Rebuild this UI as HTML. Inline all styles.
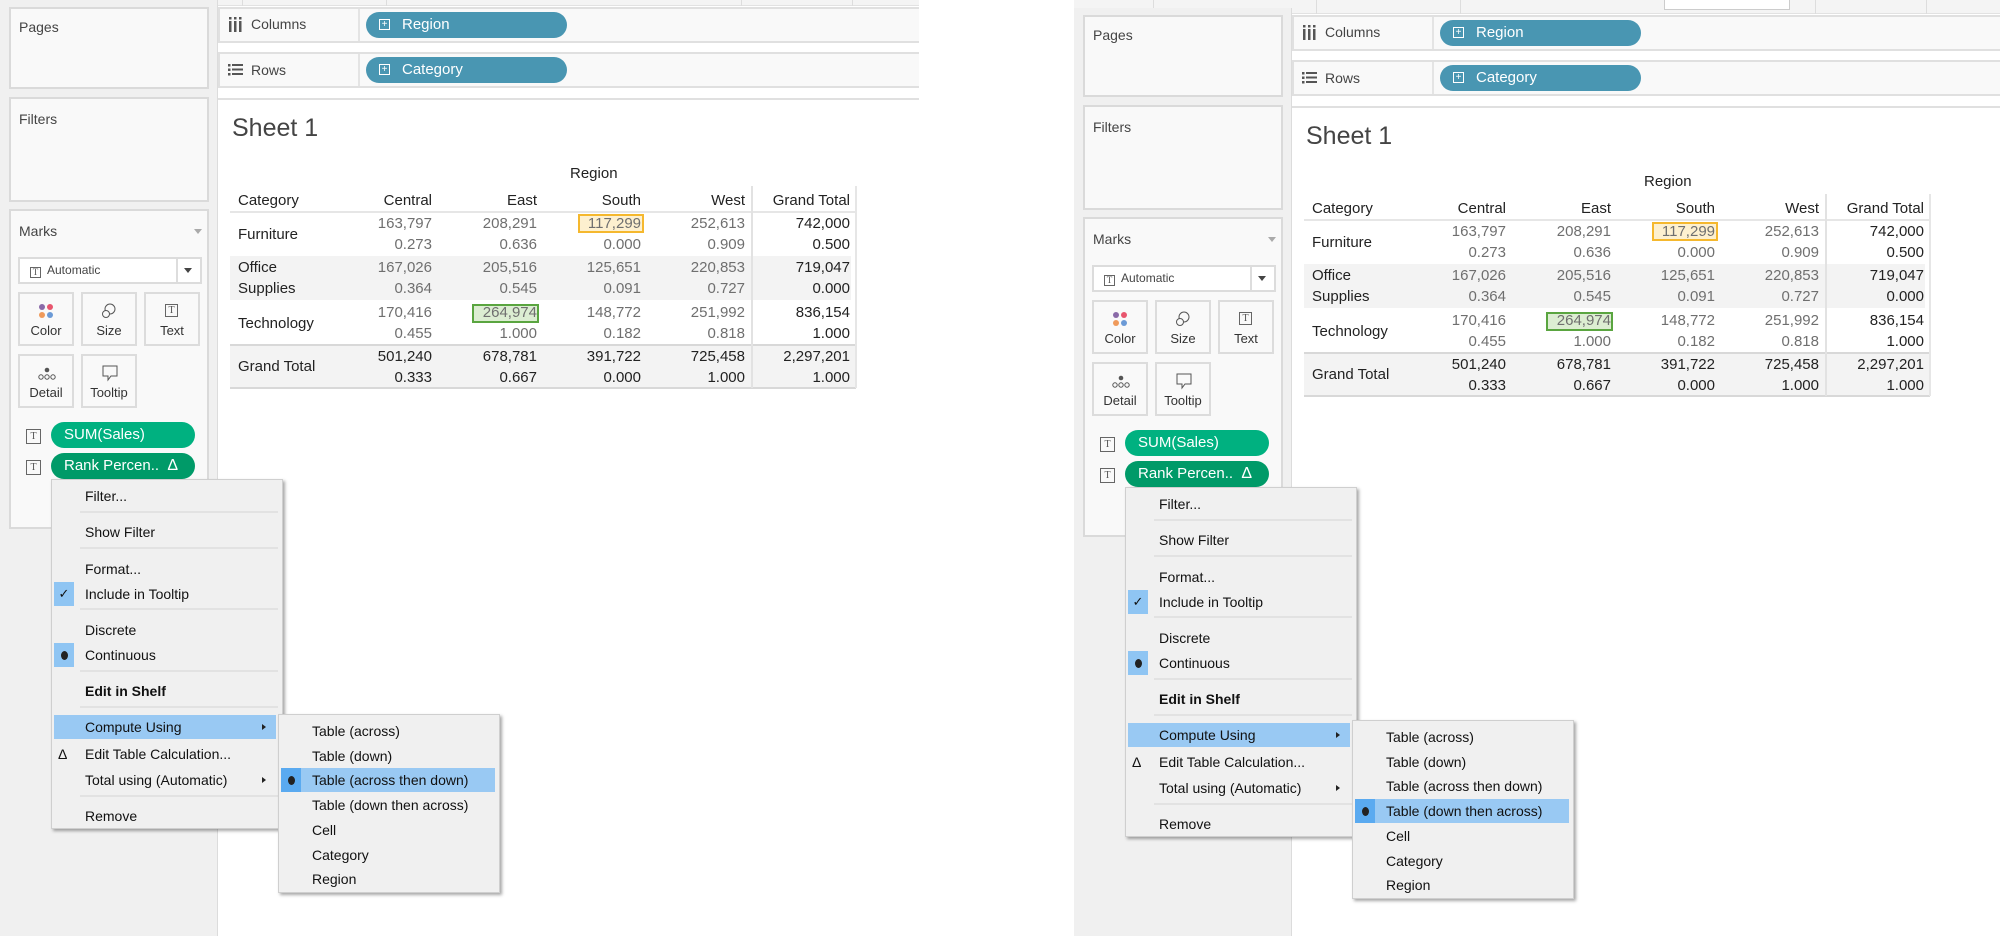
<!DOCTYPE html>
<html><head><meta charset="utf-8"><style>
*{margin:0;padding:0;box-sizing:border-box}
html,body{width:2000px;height:936px;overflow:hidden}
body{background:#fff;position:relative;font-family:"Liberation Sans",Arial,sans-serif;color:#333}
.scr{position:absolute;top:0;height:936px;overflow:hidden;background:#fff}
.in{position:absolute;left:0;width:100%;height:928px;overflow:visible}
.a{position:absolute}
.strip{left:0;top:-30px;width:1000px;height:36px;background:#f4f4f4;border-bottom:1px solid #e2e2e2}
.side{left:0;top:0;width:218px;height:936px;background:#f0f0f0;border-right:1px solid #dcdcdc}
.box{background:#f9f9f9;border:2px solid #dadada}
.lbl{font-size:14px;color:#444}
.shelf{background:#f9f9f9;border:2px solid #e0e0e0;left:218px;width:760px;height:36px}
.shelf .div{position:absolute;left:138px;top:0;width:2px;height:32px;background:#e4e4e4}
.pill{position:absolute;border-radius:14px;color:#fff;font-size:15px;line-height:26px;height:26px}
.blue{background:#4996b2;left:146px;top:3px;width:201px;padding-left:36px}
.pl{position:absolute;left:13px;top:7px;width:11px;height:11px;border:1px solid #fff;font-size:10px;line-height:9px;text-align:center}
.canvas{left:218px;top:98px;width:760px;height:830px;background:#fff;border-top:2px solid #e0e0e0}
.t{position:absolute;font-size:15px;line-height:21px;white-space:nowrap}
.v{color:#6f6f6f;text-align:right}
.d{color:#222;text-align:right}
.band{position:absolute;background:#f3f3f3}
.btn{position:absolute;background:#f9f9f9;border:2px solid #dcdcdc;width:56px;height:54px;font-size:13px;color:#333;text-align:center}
.btn .cap{position:absolute;left:0;right:0;bottom:6px}
.ti{display:inline-block;width:13px;height:13px;border:1px solid #666;font-size:10px;line-height:11px;text-align:center;color:#555;font-family:"Liberation Serif",serif}
.menu{position:absolute;background:#f0f0f0;border:1px solid #cfcfcf;box-shadow:2px 2px 3px rgba(0,0,0,.35)}
.mi{position:absolute;left:0;right:0;height:24px;font-size:14px;line-height:24px;color:#111;padding-left:33px;white-space:nowrap}
.sep{position:absolute;left:28px;right:4px;height:2px;background:#e2e2e2}
.hl{background:#99c9f3}
.ic{position:absolute;left:2px;top:0;width:20px;height:24px;background:#8fc5f3;text-align:center;font-size:13px}
.dot{display:inline-block;width:7px;height:9px;border-radius:50%;background:#222;margin-top:8px}
.arr{position:absolute;right:10px;top:9px;width:0;height:0;border-left:4px solid #222;border-top:3px solid transparent;border-bottom:3px solid transparent}
</style></head><body>

<div class="scr" style="left:0;width:919px">
<div class="in" style="top:0">
<div class="a strip"></div>
<div class="a" style="left:79px;top:-10px;width:1px;height:16px;background:#ddd"></div>
<div class="a" style="left:242px;top:-10px;width:1px;height:16px;background:#ddd"></div>
<div class="a" style="left:386px;top:-10px;width:1px;height:16px;background:#ddd"></div>
<div class="a" style="left:741px;top:-10px;width:1px;height:16px;background:#ddd"></div>
<div class="a" style="left:852px;top:-10px;width:1px;height:16px;background:#ddd"></div>
<div class="a side"></div>
<div class="a box" style="left:9px;top:7px;width:200px;height:82px"><div class="a lbl" style="left:8px;top:10px">Pages</div></div>
<div class="a box" style="left:9px;top:97px;width:200px;height:105px"><div class="a lbl" style="left:8px;top:12px">Filters</div></div>
<div class="a box" style="left:9px;top:209px;width:200px;height:320px">
 <div class="a lbl" style="left:8px;top:12px">Marks</div>
 <div class="a" style="left:183px;top:18px;border-top:5px solid #aaa;border-left:4px solid transparent;border-right:4px solid transparent"></div>
 <div class="a" style="left:7px;top:46px;width:184px;height:27px;background:#fff;border:2px solid #dcdcdc;font-size:12px;color:#444;line-height:23px;padding-left:10px"><span class="ti" style="width:11px;height:11px;font-size:9px;line-height:9px;vertical-align:-1px">T</span>&nbsp; Automatic
  <div class="a" style="left:156px;top:0;width:2px;height:23px;background:#ddd"></div>
  <div class="a" style="left:164px;top:9px;border-top:5px solid #444;border-left:4px solid transparent;border-right:4px solid transparent"></div></div>
 <div class="btn" style="left:7px;top:81px"><div class="a" style="left:19px;top:10px;width:6px;height:6px;border-radius:3px;background:#8a6aa8"></div><div class="a" style="left:27px;top:10px;width:6px;height:6px;border-radius:3px;background:#e8566e"></div><div class="a" style="left:19px;top:18px;width:6px;height:6px;border-radius:3px;background:#ef9a5b"></div><div class="a" style="left:27px;top:18px;width:6px;height:6px;border-radius:3px;background:#6b9ad6"></div><div class="cap">Color</div></div>
 <div class="btn" style="left:70px;top:81px"><svg class="a" style="left:17px;top:8px" width="18" height="18"><circle cx="10" cy="7" r="5" fill="none" stroke="#555"/><circle cx="6" cy="12" r="3.5" fill="#f9f9f9" stroke="#555"/></svg><div class="cap">Size</div></div>
 <div class="btn" style="left:133px;top:81px"><span class="ti a" style="left:19px;top:10px">T</span><div class="cap">Text</div></div>
 <div class="btn" style="left:7px;top:143px"><svg class="a" style="left:16px;top:10px" width="22" height="16"><circle cx="11" cy="4" r="2.3" fill="#555"/><circle cx="5" cy="11" r="2.2" fill="none" stroke="#555"/><circle cx="11" cy="11" r="2.2" fill="none" stroke="#555"/><circle cx="17" cy="11" r="2.2" fill="none" stroke="#555"/></svg><div class="cap">Detail</div></div>
 <div class="btn" style="left:70px;top:143px"><svg class="a" style="left:18px;top:8px" width="18" height="18"><path d="M2 2h14v10h-6l-3 4v-4H2z" fill="none" stroke="#555"/></svg><div class="cap">Tooltip</div></div>
 <span class="ti a" style="left:15px;top:218px;width:15px;height:15px;line-height:13px">T</span>
 <div class="pill" style="left:40px;top:211px;width:144px;background:#00b180;padding-left:13px">SUM(Sales)</div>
 <span class="ti a" style="left:15px;top:249px;width:15px;height:15px;line-height:13px">T</span>
 <div class="pill" style="left:40px;top:242px;width:144px;background:#009a68;padding-left:13px">Rank Percen..&nbsp; <span style="font-size:16px">&#916;</span></div>
</div>

<div class="a shelf" style="top:7px"><div class="div"></div>
 <svg class="a" style="left:8px;top:8px" width="16" height="16"><rect x="1" y="4" width="2.5" height="11" fill="#555"/><rect x="6" y="4" width="2.5" height="11" fill="#555"/><rect x="11" y="4" width="2.5" height="11" fill="#555"/><rect x="1" y="0" width="2.5" height="2.5" fill="#555"/><rect x="6" y="0" width="2.5" height="2.5" fill="#555"/><rect x="11" y="0" width="2.5" height="2.5" fill="#555"/></svg>
 <div class="a lbl" style="left:31px;top:7px">Columns</div>
 <div class="pill blue"><div class="pl">+</div>Region</div></div>
<div class="a shelf" style="top:52px"><div class="div"></div>
 <svg class="a" style="left:8px;top:9px" width="16" height="14"><g fill="#555"><rect x="0" y="1" width="2.5" height="2.5"/><rect x="0" y="5.5" width="2.5" height="2.5"/><rect x="0" y="10" width="2.5" height="2.5"/><rect x="4" y="1" width="11" height="2"/><rect x="4" y="5.5" width="11" height="2"/><rect x="4" y="10" width="11" height="2"/></g></svg>
 <div class="a lbl" style="left:31px;top:8px">Rows</div>
 <div class="pill blue"><div class="pl">+</div>Category</div></div>

<div class="a canvas"></div>
<div class="a" style="left:232px;top:114px;font-size:25px;color:#444">Sheet 1</div>
<div class="t" style="left:570px;top:163px;color:#222">Region</div>
<div class="band" style="left:230px;top:256px;width:621px;height:44px"></div>
<div class="band" style="left:230px;top:345px;width:626px;height:43px"></div>
<div class="a" style="left:230px;top:211px;width:626px;height:2px;background:#e6e6e6"></div>
<div class="a" style="left:230px;top:344px;width:626px;height:2px;background:#d8d8d8"></div>
<div class="a" style="left:230px;top:387px;width:626px;height:2px;background:#d8d8d8"></div>
<div class="a" style="left:751px;top:186px;width:2px;height:202px;background:#e2e2e2"></div>
<div class="a" style="left:855px;top:186px;width:2px;height:202px;background:#e6e6e6"></div>
<div class="a" style="left:578px;top:214px;width:66px;height:19px;background:#fdf0cf;border:2px solid #f5b82e"></div>
<div class="a" style="left:472px;top:304px;width:67px;height:19px;background:#dcedd2;border:2px solid #5aa540"></div>
<div class="t" style="left:238px;top:190px;color:#222">Category</div>
<div class="t" style="left:238px;top:224px;color:#222">Furniture</div>
<div class="t" style="left:238px;top:257px;color:#222">Office<br>Supplies</div>
<div class="t" style="left:238px;top:313px;color:#222">Technology</div>
<div class="t" style="left:238px;top:356px;color:#222">Grand Total</div>
<div class="t d" style="left:332px;width:100px;top:190px">Central</div>
<div class="t d" style="left:437px;width:100px;top:190px">East</div>
<div class="t d" style="left:541px;width:100px;top:190px">South</div>
<div class="t d" style="left:645px;width:100px;top:190px">West</div>
<div class="t d" style="left:750px;width:100px;top:190px">Grand Total</div>
<div class="t v" style="left:332px;width:100px;top:213px">163,797<br>0.273</div>
<div class="t v" style="left:437px;width:100px;top:213px">208,291<br>0.636</div>
<div class="t v" style="left:541px;width:100px;top:213px">117,299<br>0.000</div>
<div class="t v" style="left:645px;width:100px;top:213px">252,613<br>0.909</div>
<div class="t d" style="left:750px;width:100px;top:213px">742,000<br>0.500</div>
<div class="t v" style="left:332px;width:100px;top:257px">167,026<br>0.364</div>
<div class="t v" style="left:437px;width:100px;top:257px">205,516<br>0.545</div>
<div class="t v" style="left:541px;width:100px;top:257px">125,651<br>0.091</div>
<div class="t v" style="left:645px;width:100px;top:257px">220,853<br>0.727</div>
<div class="t d" style="left:750px;width:100px;top:257px">719,047<br>0.000</div>
<div class="t v" style="left:332px;width:100px;top:302px">170,416<br>0.455</div>
<div class="t v" style="left:437px;width:100px;top:302px">264,974<br>1.000</div>
<div class="t v" style="left:541px;width:100px;top:302px">148,772<br>0.182</div>
<div class="t v" style="left:645px;width:100px;top:302px">251,992<br>0.818</div>
<div class="t d" style="left:750px;width:100px;top:302px">836,154<br>1.000</div>
<div class="t d" style="left:332px;width:100px;top:346px">501,240<br>0.333</div>
<div class="t d" style="left:437px;width:100px;top:346px">678,781<br>0.667</div>
<div class="t d" style="left:541px;width:100px;top:346px">391,722<br>0.000</div>
<div class="t d" style="left:645px;width:100px;top:346px">725,458<br>1.000</div>
<div class="t d" style="left:750px;width:100px;top:346px">2,297,201<br>1.000</div>

<div class="menu" style="left:51px;top:479px;width:232px;height:350px">
 <div class="mi" style="top:4px">Filter...</div><div class="sep" style="top:31px"></div>
 <div class="mi" style="top:40px">Show Filter</div><div class="sep" style="top:67px"></div>
 <div class="mi" style="top:77px">Format...</div>
 <div class="mi" style="top:102px"><div class="ic">&#10003;</div>Include in Tooltip</div><div class="sep" style="top:128px"></div>
 <div class="mi" style="top:138px">Discrete</div>
 <div class="mi" style="top:163px"><div class="ic"><span class="dot"></span></div>Continuous</div><div class="sep" style="top:190px"></div>
 <div class="mi" style="top:199px;font-weight:bold">Edit in Shelf</div><div class="sep" style="top:226px"></div>
 <div class="mi hl" style="top:235px;left:2px;right:6px;padding-left:31px">Compute Using<div class="arr"></div></div>
 <div class="mi" style="top:262px"><div class="a" style="left:6px;top:0">&#916;</div>Edit Table Calculation...</div>
 <div class="mi" style="top:288px">Total using (Automatic)<div class="arr" style="right:16px"></div></div><div class="sep" style="top:315px"></div>
 <div class="mi" style="top:324px">Remove</div>
</div>
<div class="menu" style="left:278px;top:714px;width:222px;height:179px">
 <div class="mi" style="top:4px">Table (across)</div>
 <div class="mi" style="top:29px">Table (down)</div>
 <div class="mi hl" style="top:53px;left:2px;right:4px;padding-left:31px"><div class="ic" style="left:0;background:#5aaaf0"><span class="dot"></span></div>Table (across then down)</div>
 <div class="mi" style="top:78px">Table (down then across)</div>
 <div class="mi" style="top:103px">Cell</div>
 <div class="mi" style="top:128px">Category</div>
 <div class="mi" style="top:152px">Region</div>
</div>
</div></div>

<div class="scr" style="left:1074px;width:926px">
<div class="in" style="top:8px">
<div class="a strip"></div>
<div class="a" style="left:79px;top:-10px;width:1px;height:16px;background:#ddd"></div>
<div class="a" style="left:242px;top:-10px;width:1px;height:16px;background:#ddd"></div>
<div class="a" style="left:386px;top:-10px;width:1px;height:16px;background:#ddd"></div>
<div class="a" style="left:590px;top:-10px;width:126px;height:12px;background:#fff;border:1px solid #ccc"></div>
<div class="a" style="left:741px;top:-10px;width:1px;height:16px;background:#ddd"></div>
<div class="a" style="left:852px;top:-10px;width:1px;height:16px;background:#ddd"></div>
<div class="a side"></div>
<div class="a box" style="left:9px;top:7px;width:200px;height:82px"><div class="a lbl" style="left:8px;top:10px">Pages</div></div>
<div class="a box" style="left:9px;top:97px;width:200px;height:105px"><div class="a lbl" style="left:8px;top:12px">Filters</div></div>
<div class="a box" style="left:9px;top:209px;width:200px;height:320px">
 <div class="a lbl" style="left:8px;top:12px">Marks</div>
 <div class="a" style="left:183px;top:18px;border-top:5px solid #aaa;border-left:4px solid transparent;border-right:4px solid transparent"></div>
 <div class="a" style="left:7px;top:46px;width:184px;height:27px;background:#fff;border:2px solid #dcdcdc;font-size:12px;color:#444;line-height:23px;padding-left:10px"><span class="ti" style="width:11px;height:11px;font-size:9px;line-height:9px;vertical-align:-1px">T</span>&nbsp; Automatic
  <div class="a" style="left:156px;top:0;width:2px;height:23px;background:#ddd"></div>
  <div class="a" style="left:164px;top:9px;border-top:5px solid #444;border-left:4px solid transparent;border-right:4px solid transparent"></div></div>
 <div class="btn" style="left:7px;top:81px"><div class="a" style="left:19px;top:10px;width:6px;height:6px;border-radius:3px;background:#8a6aa8"></div><div class="a" style="left:27px;top:10px;width:6px;height:6px;border-radius:3px;background:#e8566e"></div><div class="a" style="left:19px;top:18px;width:6px;height:6px;border-radius:3px;background:#ef9a5b"></div><div class="a" style="left:27px;top:18px;width:6px;height:6px;border-radius:3px;background:#6b9ad6"></div><div class="cap">Color</div></div>
 <div class="btn" style="left:70px;top:81px"><svg class="a" style="left:17px;top:8px" width="18" height="18"><circle cx="10" cy="7" r="5" fill="none" stroke="#555"/><circle cx="6" cy="12" r="3.5" fill="#f9f9f9" stroke="#555"/></svg><div class="cap">Size</div></div>
 <div class="btn" style="left:133px;top:81px"><span class="ti a" style="left:19px;top:10px">T</span><div class="cap">Text</div></div>
 <div class="btn" style="left:7px;top:143px"><svg class="a" style="left:16px;top:10px" width="22" height="16"><circle cx="11" cy="4" r="2.3" fill="#555"/><circle cx="5" cy="11" r="2.2" fill="none" stroke="#555"/><circle cx="11" cy="11" r="2.2" fill="none" stroke="#555"/><circle cx="17" cy="11" r="2.2" fill="none" stroke="#555"/></svg><div class="cap">Detail</div></div>
 <div class="btn" style="left:70px;top:143px"><svg class="a" style="left:18px;top:8px" width="18" height="18"><path d="M2 2h14v10h-6l-3 4v-4H2z" fill="none" stroke="#555"/></svg><div class="cap">Tooltip</div></div>
 <span class="ti a" style="left:15px;top:218px;width:15px;height:15px;line-height:13px">T</span>
 <div class="pill" style="left:40px;top:211px;width:144px;background:#00b180;padding-left:13px">SUM(Sales)</div>
 <span class="ti a" style="left:15px;top:249px;width:15px;height:15px;line-height:13px">T</span>
 <div class="pill" style="left:40px;top:242px;width:144px;background:#009a68;padding-left:13px">Rank Percen..&nbsp; <span style="font-size:16px">&#916;</span></div>
</div>

<div class="a shelf" style="top:7px"><div class="div"></div>
 <svg class="a" style="left:8px;top:8px" width="16" height="16"><rect x="1" y="4" width="2.5" height="11" fill="#555"/><rect x="6" y="4" width="2.5" height="11" fill="#555"/><rect x="11" y="4" width="2.5" height="11" fill="#555"/><rect x="1" y="0" width="2.5" height="2.5" fill="#555"/><rect x="6" y="0" width="2.5" height="2.5" fill="#555"/><rect x="11" y="0" width="2.5" height="2.5" fill="#555"/></svg>
 <div class="a lbl" style="left:31px;top:7px">Columns</div>
 <div class="pill blue"><div class="pl">+</div>Region</div></div>
<div class="a shelf" style="top:52px"><div class="div"></div>
 <svg class="a" style="left:8px;top:9px" width="16" height="14"><g fill="#555"><rect x="0" y="1" width="2.5" height="2.5"/><rect x="0" y="5.5" width="2.5" height="2.5"/><rect x="0" y="10" width="2.5" height="2.5"/><rect x="4" y="1" width="11" height="2"/><rect x="4" y="5.5" width="11" height="2"/><rect x="4" y="10" width="11" height="2"/></g></svg>
 <div class="a lbl" style="left:31px;top:8px">Rows</div>
 <div class="pill blue"><div class="pl">+</div>Category</div></div>

<div class="a canvas" style="width:800px;height:822px"></div>
<div class="a" style="left:232px;top:114px;font-size:25px;color:#444">Sheet 1</div>
<div class="t" style="left:570px;top:163px;color:#222">Region</div>
<div class="band" style="left:230px;top:256px;width:621px;height:44px"></div>
<div class="band" style="left:230px;top:345px;width:626px;height:43px"></div>
<div class="a" style="left:230px;top:211px;width:626px;height:2px;background:#e6e6e6"></div>
<div class="a" style="left:230px;top:344px;width:626px;height:2px;background:#d8d8d8"></div>
<div class="a" style="left:230px;top:387px;width:626px;height:2px;background:#d8d8d8"></div>
<div class="a" style="left:751px;top:186px;width:2px;height:202px;background:#e2e2e2"></div>
<div class="a" style="left:855px;top:186px;width:2px;height:202px;background:#e6e6e6"></div>
<div class="a" style="left:578px;top:214px;width:66px;height:19px;background:#fdf0cf;border:2px solid #f5b82e"></div>
<div class="a" style="left:472px;top:304px;width:67px;height:19px;background:#dcedd2;border:2px solid #5aa540"></div>
<div class="t" style="left:238px;top:190px;color:#222">Category</div>
<div class="t" style="left:238px;top:224px;color:#222">Furniture</div>
<div class="t" style="left:238px;top:257px;color:#222">Office<br>Supplies</div>
<div class="t" style="left:238px;top:313px;color:#222">Technology</div>
<div class="t" style="left:238px;top:356px;color:#222">Grand Total</div>
<div class="t d" style="left:332px;width:100px;top:190px">Central</div>
<div class="t d" style="left:437px;width:100px;top:190px">East</div>
<div class="t d" style="left:541px;width:100px;top:190px">South</div>
<div class="t d" style="left:645px;width:100px;top:190px">West</div>
<div class="t d" style="left:750px;width:100px;top:190px">Grand Total</div>
<div class="t v" style="left:332px;width:100px;top:213px">163,797<br>0.273</div>
<div class="t v" style="left:437px;width:100px;top:213px">208,291<br>0.636</div>
<div class="t v" style="left:541px;width:100px;top:213px">117,299<br>0.000</div>
<div class="t v" style="left:645px;width:100px;top:213px">252,613<br>0.909</div>
<div class="t d" style="left:750px;width:100px;top:213px">742,000<br>0.500</div>
<div class="t v" style="left:332px;width:100px;top:257px">167,026<br>0.364</div>
<div class="t v" style="left:437px;width:100px;top:257px">205,516<br>0.545</div>
<div class="t v" style="left:541px;width:100px;top:257px">125,651<br>0.091</div>
<div class="t v" style="left:645px;width:100px;top:257px">220,853<br>0.727</div>
<div class="t d" style="left:750px;width:100px;top:257px">719,047<br>0.000</div>
<div class="t v" style="left:332px;width:100px;top:302px">170,416<br>0.455</div>
<div class="t v" style="left:437px;width:100px;top:302px">264,974<br>1.000</div>
<div class="t v" style="left:541px;width:100px;top:302px">148,772<br>0.182</div>
<div class="t v" style="left:645px;width:100px;top:302px">251,992<br>0.818</div>
<div class="t d" style="left:750px;width:100px;top:302px">836,154<br>1.000</div>
<div class="t d" style="left:332px;width:100px;top:346px">501,240<br>0.333</div>
<div class="t d" style="left:437px;width:100px;top:346px">678,781<br>0.667</div>
<div class="t d" style="left:541px;width:100px;top:346px">391,722<br>0.000</div>
<div class="t d" style="left:645px;width:100px;top:346px">725,458<br>1.000</div>
<div class="t d" style="left:750px;width:100px;top:346px">2,297,201<br>1.000</div>

<div class="menu" style="left:51px;top:479px;width:232px;height:350px">
 <div class="mi" style="top:4px">Filter...</div><div class="sep" style="top:31px"></div>
 <div class="mi" style="top:40px">Show Filter</div><div class="sep" style="top:67px"></div>
 <div class="mi" style="top:77px">Format...</div>
 <div class="mi" style="top:102px"><div class="ic">&#10003;</div>Include in Tooltip</div><div class="sep" style="top:128px"></div>
 <div class="mi" style="top:138px">Discrete</div>
 <div class="mi" style="top:163px"><div class="ic"><span class="dot"></span></div>Continuous</div><div class="sep" style="top:190px"></div>
 <div class="mi" style="top:199px;font-weight:bold">Edit in Shelf</div><div class="sep" style="top:226px"></div>
 <div class="mi hl" style="top:235px;left:2px;right:6px;padding-left:31px">Compute Using<div class="arr"></div></div>
 <div class="mi" style="top:262px"><div class="a" style="left:6px;top:0">&#916;</div>Edit Table Calculation...</div>
 <div class="mi" style="top:288px">Total using (Automatic)<div class="arr" style="right:16px"></div></div><div class="sep" style="top:315px"></div>
 <div class="mi" style="top:324px">Remove</div>
</div>
<div class="menu" style="left:278px;top:712px;width:222px;height:179px">
 <div class="mi" style="top:4px">Table (across)</div>
 <div class="mi" style="top:29px">Table (down)</div>
 <div class="mi" style="top:53px">Table (across then down)</div>
 <div class="mi hl" style="top:78px;left:2px;right:4px;padding-left:31px"><div class="ic" style="left:0;background:#5aaaf0"><span class="dot"></span></div>Table (down then across)</div>
 <div class="mi" style="top:103px">Cell</div>
 <div class="mi" style="top:128px">Category</div>
 <div class="mi" style="top:152px">Region</div>
</div>
</div></div>
</body></html>
